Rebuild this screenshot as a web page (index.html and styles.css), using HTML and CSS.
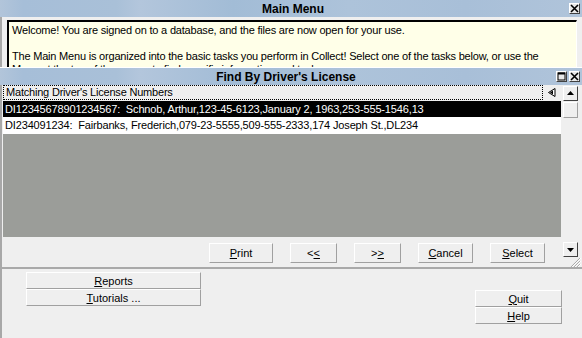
FILE: index.html
```html
<!DOCTYPE html>
<html lang="en">
<head>
    <meta charset="UTF-8">
    <title>Main Menu</title>
    <link rel="stylesheet" href="styles.css">
</head>
<body>

    <div class="titlebar">
        <span class="title-text">Main Menu</span>
        <span class="title-btns">
            <span class="tb-btn">
                <svg width="9" height="9" viewBox="0 0 9 9"><path d="M1 1L8 8M8 1L1 8" stroke="#000" stroke-width="1.6"/></svg>
            </span>
        </span>
    </div>

    <div class="main-body">
        <div class="welcome">
            <p>Welcome! You are signed on to a database, and the files are now open for your use.</p>
            <p>The Main Menu is organized into the basic tasks you perform in Collect! Select one of the tasks below, or use the Menu at the top of the screen to find specific information and tasks.</p>
        </div>

        <!-- Find window sits over the welcome text -->
        <div class="find-window">
            <div class="titlebar find-title">
                <span class="title-text">Find By Driver's License</span>
                <span class="title-btns">
                    <span class="tb-btn">
                        <svg width="9" height="9" viewBox="0 0 9 9"><rect x="1" y="1" width="7" height="7" fill="none" stroke="#000" stroke-width="1"/><path d="M1 1.5H8" stroke="#000" stroke-width="2"/></svg>
                    </span>
                    <span class="tb-btn">
                        <svg width="9" height="9" viewBox="0 0 9 9"><path d="M1 1L8 8M8 1L1 8" stroke="#000" stroke-width="1.6"/></svg>
                    </span>
                </span>
            </div>

            <div class="find-body">
                <div class="list-col">
                    <div class="list-head">
                        <div class="head-label">Matching Driver's License Numbers</div>
                        <svg class="head-arrow" width="8" height="9" viewBox="0 0 8 9"><path d="M7 0.5V8.5L0.5 4.5Z" fill="#fff" stroke="#000"/><path d="M5 2.5V6.5L2 4.5Z" fill="#000"/></svg>
                    </div>
                    <div class="row selected">DI12345678901234567:&nbsp; Schnob, Arthur,123-45-6123,January 2, 1963,253-555-1546,13</div>
                    <div class="row">DI234091234:&nbsp; Fairbanks, Frederich,079-23-5555,509-555-2333,174 Joseph St.,DL234</div>
                    <div class="list-empty"></div>
                    <div class="btn-row">
                        <button class="btn w64"><u>P</u>rint</button>
                        <button class="btn w47">&lt;<u>&lt;</u></button>
                        <button class="btn w47">&gt;<u>&gt;</u></button>
                        <button class="btn w55"><u>C</u>ancel</button>
                        <button class="btn w55"><u>S</u>elect</button>
                    </div>
                </div>
                <div class="scroll-col">
                    <span class="sb-btn">
                        <svg width="7" height="4" viewBox="0 0 7 4"><path d="M3.5 0L7 4H0Z" fill="#000"/></svg>
                    </span>
                    <span class="sb-thumb"></span>
                    <span class="sb-track"></span>
                    <span class="sb-btn">
                        <svg width="7" height="4" viewBox="0 0 7 4"><path d="M0 0H7L3.5 4Z" fill="#000"/></svg>
                    </span>
                    <svg class="grip" width="11" height="10" viewBox="0 0 11 10">
                        <path d="M10 1L1 10M10 4L4 10M10 7L7 10" stroke="#a0a0a0" stroke-width="1"/>
                        <path d="M11 1L2 10M11 4L5 10M11 7L8 10" stroke="#fff" stroke-width="1"/>
                    </svg>
                </div>
            </div>
        </div>

        <div class="menu-area">
            <div class="menu-left">
                <button class="btn wide"><u>R</u>eports</button>
                <button class="btn wide"><u>T</u>utorials ...</button>
            </div>
            <div class="menu-right">
                <button class="btn quit"><u>Q</u>uit</button>
                <button class="btn quit"><u>H</u>elp</button>
            </div>
        </div>
    </div>

</body>
</html>
```

FILE: styles.css
```css
body {
    margin: 0;
    width: 582px;
    height: 338px;
    overflow: hidden;
    background-color: #efefef;
    font-family: "Liberation Sans", Arial, sans-serif;
    font-size: 11px;
    color: #000;
}
.titlebar {
    height: 17px;
    display: flex;
    align-items: center;
    position: relative;
    background: linear-gradient(90deg, #b2c5da 0%, #a6bed8 4%, #a9c0d8 20%, #b3c6dc 24%, #a2bcd6 40%, #adc3da 60%, #a8bfd8 80%, #b0c4da 100%);
}
.title-text {
    flex: 1;
    text-align: center;
    font-weight: bold;
    font-size: 12px;
    padding-left: 4px;
}
.title-btns {
    position: absolute;
    right: 2px;
    top: 3px;
    display: flex;
    gap: 2px;
}
.tb-btn {
    width: 9px;
    height: 9px;
    display: flex;
    background-color: #e8e8e8;
    border: 1px solid;
    border-color: #fff #404040 #404040 #fff;
}
.main-body {
    border-left: 2px solid #a8a8a8;
    border-bottom: 2px solid #b4b4b4;
    height: 319px;
    padding-top: 3px;
}
.welcome {
    margin: 0 5px 0 5px;
    height: 43px;
    overflow: hidden;
    background-color: #ffffe8;
    border-top: 2px solid #000;
    border-left: 2px solid #000;
    border-right: 1px solid #fff;
    padding: 2px 24px 0 3px;
    letter-spacing: -0.2px;
}
.welcome p {
    margin: 0 0 13px 0;
    line-height: 13px;
}
.find-window {
    margin-left: -2px;
    border-top: 1px solid #fff;
}
.find-title .title-text {
    padding: 0 10px 0 0;
}
.find-body {
    display: flex;
    height: 182px;
    border-left: 2px solid #a8a8a8;
    border-bottom: 2px solid #a9a9a9;
    padding-left: 1px;
}
.list-col {
    width: 558px;
    display: flex;
    flex-direction: column;
}
.list-head {
    height: 15px;
    margin-bottom: 1px;
    display: flex;
    align-items: center;
}
.head-label {
    width: 536px;
    height: 13px;
    line-height: 13px;
    padding-left: 2px;
    border: 1px dotted #000;
    letter-spacing: -0.2px;
}
.head-arrow {
    margin-left: 5px;
}
.row {
    height: 16px;
    line-height: 16px;
    padding-left: 2px;
    background-color: #fff;
    white-space: nowrap;
    letter-spacing: -0.15px;
}
.row + .row {
    height: 17px;
}
.row.selected {
    background-color: #000;
    color: #fff;
}
.list-empty {
    flex: 1;
    background-color: #9b9d99;
}
.btn-row {
    height: 30px;
    display: flex;
    justify-content: flex-end;
    align-items: flex-start;
    gap: 17px;
    padding: 6px 16px 0 0;
    box-sizing: border-box;
}
.btn {
    height: 20px;
    padding: 0;
    background-color: #efefef;
    border: 1px solid;
    border-color: #fff #a0a0a0 #a0a0a0 #fff;
    font-family: "Liberation Sans", Arial, sans-serif;
    font-size: 11px;
    color: #000;
}
.w64 { width: 64px; }
.w47 { width: 47px; }
.w55 { width: 55px; }
.scroll-col {
    width: 21px;
    display: flex;
    flex-direction: column;
    padding: 1px 0 0 2px;
    box-sizing: border-box;
}
.sb-btn {
    width: 13px;
    height: 13px;
    display: flex;
    align-items: center;
    justify-content: center;
    background-color: #efefef;
    border: 1px solid;
    border-color: #fff #404040 #404040 #fff;
}
.sb-thumb {
    width: 13px;
    height: 14px;
    margin-top: 1px;
    background-color: #efefef;
    border: 1px solid;
    border-color: #fff #a0a0a0 #a0a0a0 #fff;
}
.sb-track {
    height: 125px;
}
.grip {
    margin-left: 7px;
}
.menu-area {
    display: flex;
    justify-content: space-between;
    padding: 3px 20px 0 24px;
}
.menu-left, .menu-right {
    display: flex;
    flex-direction: column;
}
.btn.wide {
    width: 175px;
    height: 17px;
}
.menu-right {
    margin-top: 18px;
}
.btn.quit {
    width: 87px;
    height: 17px;
}
```
